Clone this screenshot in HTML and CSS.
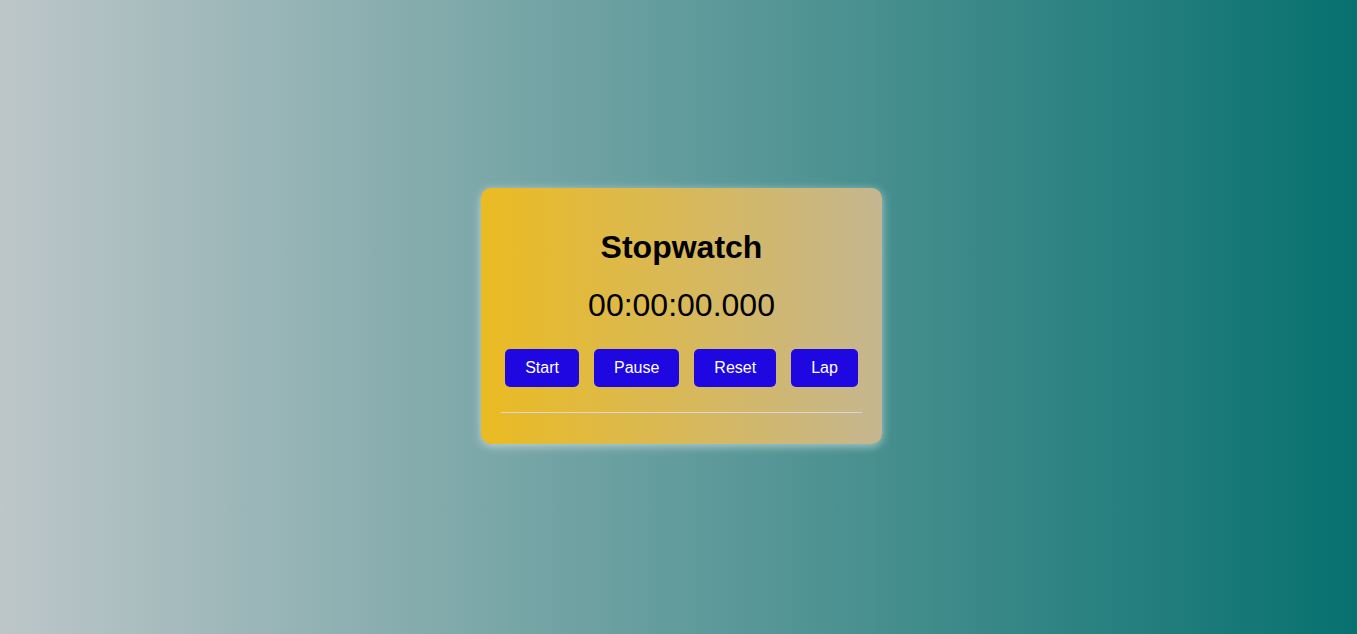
FILE: index.html
```html
<!DOCTYPE html>
<html lang="en">
<head>
<meta charset="utf-8">
<title>Stopwatch</title>
<link rel="stylesheet" href="styles.css">
</head>
<body>
<div class="card">
  <h1 class="title">Stopwatch</h1>
  <div class="time">00:00:00.000</div>
  <div class="controls">
    <button class="btn">Start</button>
    <button class="btn">Pause</button>
    <button class="btn">Reset</button>
    <button class="btn">Lap</button>
  </div>
  <hr class="divider">
  <ul class="laps"></ul>
</div>
</body>
</html>
```

FILE: styles.css
```css
html, body {
  margin: 0;
  height: 100%;
}
body {
  font-family: "Liberation Sans", Arial, sans-serif;
  background: linear-gradient(to right, #bdc6c9, #07716f);
  display: flex;
  align-items: center;
  justify-content: center;
  padding-left: 6px;
  box-sizing: border-box;
}
.card {
  width: 361px;
  padding: 20px;
  border-radius: 10px;
  background: linear-gradient(to right, #ebbb22, #c5b690);
  box-shadow: 0 2px 10px rgba(255, 255, 255, 0.55);
  text-align: center;
  margin-top: -2px;
}
.title {
  font-size: 32px;
  font-weight: bold;
  margin: 21px 0 21px;
  color: #000;
}
.time {
  font-size: 32px;
  color: #000;
  margin-bottom: 25px;
}
.controls {
  display: flex;
  justify-content: center;
  gap: 15px;
}
.btn {
  font-family: "Liberation Sans", Arial, sans-serif;
  font-size: 16px;
  padding: 10px 20px;
  line-height: 18px;
  border: none;
  border-radius: 5px;
  background: #1e07e0;
  color: #fff;
}
.divider {
  border: none;
  border-top: 1px solid #d8d8d8;
  margin: 25px 0 0;
}
.laps {
  list-style: none;
  margin: 0;
  padding: 0;
  height: 11px;
}
```
